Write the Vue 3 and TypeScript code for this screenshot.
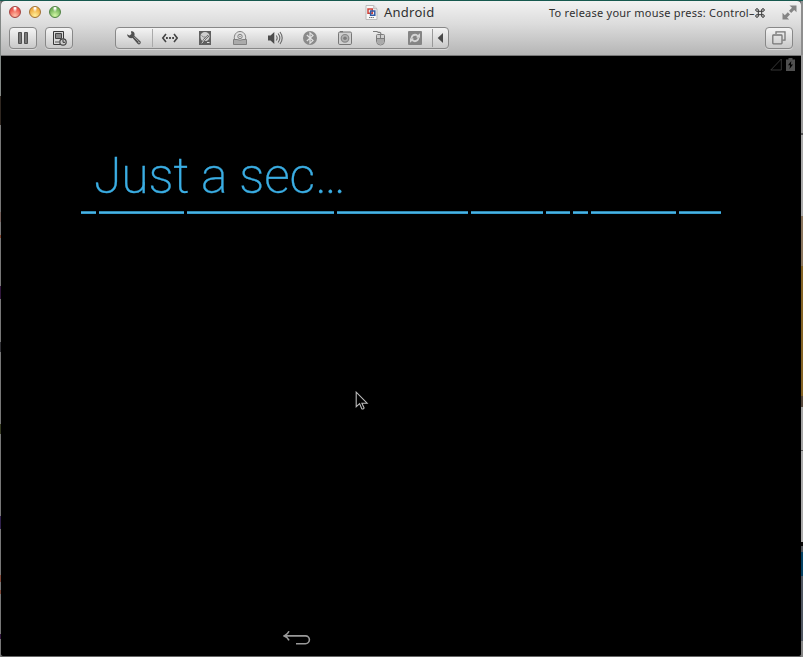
<script setup lang="ts">
const lights: string[] = ['red', 'amber', 'green']
const segments: number[] = [15, 85.5, 147, 131.5, 72, 24, 15, 85.5, 42]
</script>

<template>
  <div class="desktop">
    <div class="edge left"></div>
    <main class="window">
      <header class="chrome">
        <div class="titlebar">
          <div class="lights">
            <span v-for="c in lights" :key="c" class="light" :class="c"></span>
          </div>
          <div class="title">
            <svg class="doc" width="13" height="15" viewBox="0 0 13 15">
              <path d="M1 .5h7.7l3.3 3.3v10.7H1z" fill="#f8f8f8" stroke="#bbb" />
              <path d="M8.7 .5v3.3H12" fill="#ddd" stroke="#aaa" stroke-width=".7" />
              <path d="M3 4h4.3v4.3H3z" fill="none" stroke="#cf4238" stroke-width="1.5" />
              <path d="M5.6 6h4.2v4.2H5.6z" fill="none" stroke="#345ba5" stroke-width="1.5" />
              <path d="M4 12.5h5" stroke="#777" stroke-dasharray="1.3 .5" />
            </svg>
            <span>Android</span>
          </div>
          <span class="hint">To release your mouse press: Control–<svg class="cmd" width="10" height="10" viewBox="0 0 10 10"><path d="M3.3 3.3h3.4v3.4H3.3zM3.3 3.3H2.1A1.3 1.3 0 1 1 3.3 2zM6.7 3.3V2A1.3 1.3 0 1 1 7.9 3.3zM6.7 6.7h1.2A1.3 1.3 0 1 1 6.7 8zM3.3 6.7V8A1.3 1.3 0 1 1 2.1 6.7z" fill="none" stroke="#303030" stroke-width="1" /></svg></span>
          <svg class="expand" width="15" height="15" viewBox="0 0 15 15" fill="#858585">
            <path d="M7.5.5h7v6.7l-2.3-2.3-3 3L7 5.7l3-3zM.5 7.8l2.3 2.4 3-3L8 9.4l-3 3 2.2 2.2H.5z" />
          </svg>
        </div>
        <div class="toolbar">
          <button class="btn">
            <svg width="12" height="14" viewBox="0 0 12 14"><path d="M1.5 1.5h3v11h-3zM7.5 1.5h3v11h-3z" fill="#777" stroke="#505050" /></svg>
          </button>
          <button class="btn second">
            <svg width="16" height="16" viewBox="0 0 16 16">
              <path d="M2.5 1.5h10v13h-10z" fill="#d8d8d8" stroke="#383838" />
              <path d="M4.5 3.5h6v5h-6z" fill="#888" stroke="#444" />
              <path d="M4 12h4" stroke="#555" />
              <circle cx="12" cy="12" r="3.2" fill="#ccc" stroke="#444" stroke-width="1.2" />
              <path d="M12 9.8v2.5h2" fill="none" stroke="#333" />
            </svg>
          </button>
          <div class="devices">
            <span class="cell first">
              <svg width="16" height="16" viewBox="0 0 16 16">
                <path d="M1 4.2L3.5 5.4 5.4 4 4.9 1.2C7.8 1 9.2 3 8.4 5.7L14.6 11.5C15.4 13.6 13.5 15 11.8 14.1L6.6 8.1C3.8 8.7 1.4 7 1 4.2z" fill="#505050" />
                <path d="M8 6.7l4.8 5" stroke="#aaa" />
                <circle cx="13" cy="12.6" r=".7" fill="#ddd" />
              </svg>
            </span>
            <span class="cell">
              <svg width="18" height="16" viewBox="0 0 18 16"><path d="M5 4L1.8 8 5 12M13 4l3.2 4-3.2 4" fill="none" stroke="#444" stroke-width="1.6" /><path d="M5 7.1h1.8v1.8H5zM8.1 7.1h1.8v1.8H8.1zM11.2 7.1H13v1.8h-1.8z" fill="#444" /></svg>
            </span>
            <span class="cell">
              <svg width="16" height="16" viewBox="0 0 16 16">
                <path d="M2 1h12v14H2z" fill="#606060" />
                <path d="M3.5 6.5C3.5 3.6 5.4 2 8 2s4.6 1.7 4.6 4.4c0 2.3-1.5 4-3.4 4.5L5.4 11C4.2 10 3.5 8.5 3.5 6.5z" fill="#d0d0d0" />
                <path d="M4.5 5.5q1.5 2 4 1.5" stroke="#777" stroke-width=".8" fill="none" />
                <path d="M11.5 5.5L8 8.8 4.8 13.3" stroke="#555" stroke-width="2" fill="none" />
                <path d="M11.4 5.5L8 8.8 4.8 13.3M10 12.5h2.5" stroke="#e8e8e8" stroke-width=".9" fill="none" />
              </svg>
            </span>
            <span class="cell">
              <svg width="16" height="16" viewBox="0 0 16 16" fill="none" stroke="#808080">
                <path d="M2.5 9.5C1.5 4.5 4.7 1.5 8 1.5s6.5 3 5.5 8" fill="#e0e0e0" />
                <circle cx="8" cy="6.5" r="2.2" /><circle cx="8" cy="6.5" r=".7" fill="#777" stroke="none" />
                <path d="M1.5 9.5H5q3 1.5 6 0h3.5v5h-13z" fill="#aaa" />
              </svg>
            </span>
            <span class="cell">
              <svg width="16" height="16" viewBox="0 0 16 16">
                <path d="M1 5.5h2.5L7.3 2v12L3.5 10.5H1z" fill="#4c4c4c" />
                <path d="M9.2 5.5q2 2.5 0 5M11.1 3.5q3.5 4.5 0 9M13 2q4.4 6 0 12" fill="none" stroke="#666" stroke-width="1.1" />
              </svg>
            </span>
            <span class="cell">
              <svg width="16" height="16" viewBox="0 0 16 16">
                <circle cx="8" cy="8" r="7" fill="#8a8a8a" />
                <path d="M4.8 5l6.2 5.6-3 2.6V2.8l3 2.6L4.8 11" fill="none" stroke="#e2e2e2" stroke-width="1.2" />
              </svg>
            </span>
            <span class="cell">
              <svg width="16" height="16" viewBox="0 0 16 16">
                <rect x="1.5" y="2" width="13" height="12.5" rx="1.3" fill="#d0d0d0" stroke="#777" />
                <path d="M3 1.7h3" stroke="#777" stroke-width="1.3" />
                <circle cx="8" cy="8.3" r="3.8" fill="#b0b0b0" stroke="#888" stroke-width="1.2" /><circle cx="8" cy="8.3" r="1.8" fill="#7c7c7c" />
              </svg>
            </span>
            <span class="cell">
              <svg width="16" height="16" viewBox="0 0 16 16" fill="none" stroke="#7c7c7c">
                <path d="M1 1.5h3.5q1 0 1.5.6t1.8.2q1.2 0 1.2 2.2" stroke-width="1.2" />
                <path d="M4.5 5.5q0-1 1-1h6q1 0 1 1V11q0 4-4 4t-4-4z" fill="#d0d0d0" />
                <path d="M5 9h7v2q0 3.5-3.5 3.5T5 11z" fill="#aaa" stroke="none" />
                <path d="M5 8.5h7M8.5 4.5v4" />
              </svg>
            </span>
            <span class="cell">
              <svg width="16" height="16" viewBox="0 0 16 16">
                <rect x="1" y="1" width="14" height="14" rx="1" fill="#858585" />
                <path d="M1 8h2.6C4 4.2 8.3 2.6 11 5l2-1.8v4.6H8.5l1.4-1.5C8 5.2 6 6.1 5.4 8" fill="#d5d5d5" />
                <path d="M15 8h-2.6c-.4 3.8-4.7 5.4-7.4 3l-2 1.8V8.2h4.5L6.1 9.7c1.9 1.1 3.9.2 4.5-1.7" fill="#d5d5d5" />
                <circle cx="8" cy="8" r="1.8" fill="#858585" />
              </svg>
            </span>
            <span class="collapse"><svg width="7" height="10" viewBox="0 0 7 10"><path d="M6 0v10L.7 5z" fill="#484848" /></svg></span>
          </div>
          <button class="btn views">
            <svg width="16" height="16" viewBox="0 0 16 16" fill="none" stroke="#777" stroke-width="1.3">
              <path d="M5 4V1.8h9v8.4h-2.5" /><rect x="1.8" y="5" width="9.2" height="8.8" rx=".7" />
            </svg>
          </button>
        </div>
      </header>
      <section class="screen">
        <div class="status">
          <svg width="12" height="13" viewBox="0 0 12 13"><path d="M11.3 1v11H.8z" fill="none" stroke="#3b3b3b" stroke-width=".9" /></svg>
          <svg width="9" height="13" viewBox="0 0 9 13"><path d="M0 1.5h2.5V0h4v1.5H9V13H0z" fill="#505050" /><path d="M5.3 3L2 7.3h2.1L3.5 11 7 6.5H4.9z" fill="#000" /></svg>
        </div>
        <h1>Just a sec…</h1>
        <div class="rule">
          <span v-for="(w, i) in segments" :key="i" :style="{ width: w + 'px' }"></span>
        </div>
        <svg class="pointer" width="14" height="20" viewBox="0 0 14 20"><path d="M1.2 1.2v14.5l3.4-3.1 2.2 5.2q1.4.8 2.3-.8l-2.2-4.8h5.2z" fill="#000" stroke="#bbb" stroke-width="1.1" /></svg>
        <svg class="back" width="28" height="16" viewBox="0 0 28 16"><path d="M6 1.3Q4.7 4.4 1.2 5.9q3.5 1.3 4.8 4.5M1.6 5.9H22.5a3.9 3.9 0 0 1 0 7.8H13" fill="none" stroke="#999" stroke-width="1.6" /></svg>
      </section>
    </main>
    <div class="edge right"></div>
  </div>
</template>

<style>
body { margin: 0; background: #000; overflow: hidden; }
</style>

<style scoped>
* { box-sizing: border-box; }
svg { display: block; flex: none; }
.desktop { width: 803px; height: 657px; display: grid; grid-template-columns: 1px 800px 2px; background: linear-gradient(#17594f 0 1px, #666 1px); overflow: hidden; }
.left { background: linear-gradient(#1a5b54 0 1px, #828785 1px 96px, #302720 96px 125px, #777 125px 212px, #75605b 212px 222px, #777 222px 235px, #80452f 235px 238px, #777 238px 286px, #31173d 286px 299px, #777 299px 342px, #303035 342px 352px, #777 352px 424px, #343920 424px 434px, #777 434px 516px, #30214d 516px 529px, #777 529px 575px, #804939 575px 582px, #777 582px 590px, #804939 590px 594px, #777 594px 634px, #31173d 634px 639px, #777 639px); }
.right { background: linear-gradient(#1a5b54 0 1px, #8e8e8e 1px 55px, #9b9b9b 55px 133px, #555 133px 135px, #aaa 135px 216px, #8b765e 216px 266px, #846324 266px 396px, #56483b 396px 407px, #a5a5a5 407px 450px, #555 450px 451px, #aaa 451px 542px, #0a0a0a 542px 546px, #54585e 546px 552px, #064365 552px 576px, #505762 576px 641px, #858585 641px); }
.window { height: 655px; margin-top: 1px; display: flex; flex-direction: column; background: #000; border-radius: 4px 4px 3px 3px; overflow: hidden; }
.chrome { height: 55px; flex: none; background: linear-gradient(#f2f2f2, #dcdcdc 23px, #b5b5b5); border-bottom: 1px solid #777; font-family: "Noto Sans", sans-serif; color: #303030; }
.titlebar { height: 24px; display: grid; grid-template-columns: 364px 184px 234px 15px; align-items: center; }
.lights { display: flex; gap: 8px; padding: 0 0 2px 8px; }
.light { width: 12px; height: 12px; border: 1px solid; border-radius: 50%; }
.red { background: radial-gradient(ellipse at 50% 10%, #fff 0 8%, transparent 32%), radial-gradient(circle at 50% 85%, #ffc0a8, #ed594e 65%); border-color: #a24340; }
.amber { background: radial-gradient(ellipse at 50% 10%, #fff 0 8%, transparent 32%), radial-gradient(circle at 50% 85%, #ffef99, #efad42 65%); border-color: #a17132; }
.green { background: radial-gradient(ellipse at 50% 10%, #fff 0 8%, transparent 32%), radial-gradient(circle at 50% 85%, #d3f8a6, #75b35c 65%); border-color: #4e8142; }
.title { display: flex; gap: 6px; align-items: center; padding-bottom: 2px; font-size: 13px; line-height: 20px; letter-spacing: .25px; }
.doc { margin-top: 1px; }
.hint { display: flex; align-items: center; font-size: 11px; line-height: 20px; letter-spacing: .24px; white-space: nowrap; }
.expand { margin: -2px 0 0 -1px; }
.toolbar { height: 30px; display: flex; align-items: flex-start; padding: 2px 8px 0; }
.btn { width: 28px; height: 22px; padding: 0; display: flex; align-items: center; justify-content: center; border: 1px solid #888; border-radius: 4px; background: linear-gradient(#f4f4f4, #c9c9c9); box-shadow: 0 1px #d9d9d9; }
.second { margin-left: 8px; }
.views { margin-left: auto; }
.devices { width: 334px; height: 22px; margin-left: 42px; display: flex; align-items: center; border: 1px solid #888; border-radius: 4px; background: linear-gradient(#f4f4f4, #c9c9c9); box-shadow: 0 1px #d9d9d9; }
.cell { width: 35px; height: 18px; display: flex; justify-content: center; align-items: center; padding-right: 2px; }
.first { width: 37px; padding-right: 0; border-right: 1px solid #aaa; }
.collapse { height: 18px; flex: 1; display: flex; align-items: center; justify-content: center; margin-left: -1px; padding-right: 1px; border-left: 1px solid #999; }
.screen { position: relative; flex: 1; background: #000; }
.status { height: 20px; display: flex; justify-content: flex-end; align-items: center; gap: 4px; padding: 0 6px 3px 0; }
h1 { height: 74px; margin: 71px 0 0 93px; font: 200 50px/58px Roboto, sans-serif; letter-spacing: -.17px; color: #3baee4; -webkit-text-stroke: .35px #3baee4; white-space: nowrap; }
.rule { display: flex; gap: 2.8px; height: 3px; margin: -10px 80px 0; width: 640px; }
.rule span { height: 3px; flex: none; background: linear-gradient(#2f86ae 0 1px, #4bb4e4 1px 2px, #359acb 2px); }
.pointer { position: absolute; left: 354px; top: 335px; }
.back { position: absolute; left: 282px; top: 574px; }
</style>
